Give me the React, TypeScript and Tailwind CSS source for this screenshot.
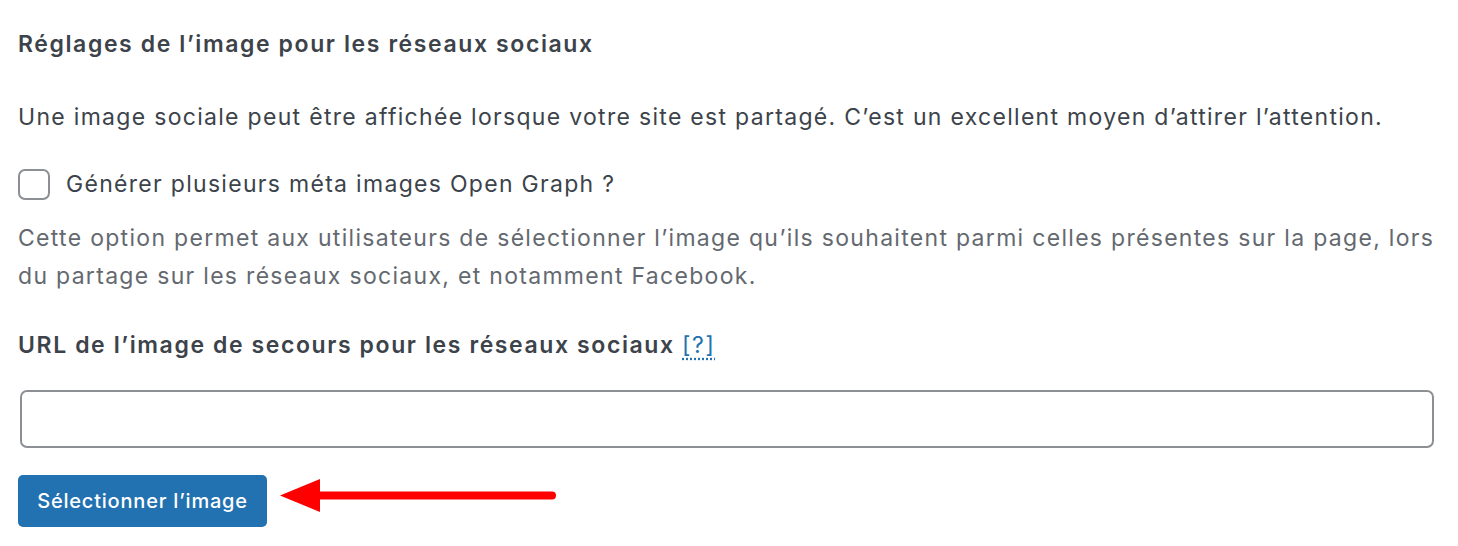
import React from "react";

export default function App() {
  return (
    <div className="w-[1458px] h-[546px] bg-white overflow-hidden font-[Inter,'Noto_Sans',sans-serif]">
      <div className="pl-[18px] pr-[22px]">
        <h2 className="pt-[29px] text-[23px] leading-[30px] font-semibold tracking-[1.6px] text-[#3c434a]">
          Réglages de l’image pour les réseaux sociaux
        </h2>
        <p className="mt-[39px] text-[23px] leading-[38px] tracking-[1.3px] text-[#3c434a] whitespace-nowrap">
          Une image sociale peut être affichée lorsque votre site est partagé. C’est un excellent moyen d’attirer l’attention.
        </p>
        <label className="mt-[33px] flex items-center h-[31px]">
          <span className="w-[32px] h-[31px] rounded-[7px] border-[2px] border-[#8c8f94] bg-white shrink-0" />
          <span className="ml-[16px] text-[23px] leading-[31px] tracking-[1.3px] text-[#3c434a]">
            Générer plusieurs méta images Open Graph ?
          </span>
        </label>
        <p className="mt-[19px] text-[23px] leading-[38px] tracking-[1.3px] text-[#646970]">
          Cette option permet aux utilisateurs de sélectionner l’image qu’ils souhaitent parmi celles présentes sur la page, lors du partage sur les réseaux sociaux, et notamment Facebook.
        </p>
        <div className="mt-[35px] text-[23px] leading-[30px] font-semibold tracking-[1.6px] text-[#3c434a]">
          URL de l’image de secours pour les réseaux sociaux{" "}
          <span className="text-[#2271b1] font-normal underline decoration-dotted underline-offset-[5px]">[?]</span>
        </div>
        <div className="mt-[30px] ml-[2px] w-[1414px] h-[58px] rounded-[7px] border-[2px] border-[#8c8f94] bg-white" />
        <div className="mt-[27px] relative flex items-center">
          <button className="w-[249px] h-[52px] rounded-[5px] bg-[#2271b1] text-white text-[20px] font-medium tracking-[0.8px]">
            Sélectionner l’image
          </button>
          <svg className="absolute left-[244px] top-0" width="300" height="52" viewBox="0 0 300 52">
            <line x1="50" y1="20.5" x2="290" y2="20.5" stroke="#ff0000" strokeWidth="8" strokeLinecap="round" />
            <polygon points="18,20.5 58,4 58,37" fill="#ff0000" />
          </svg>
        </div>
      </div>
    </div>
  );
}
